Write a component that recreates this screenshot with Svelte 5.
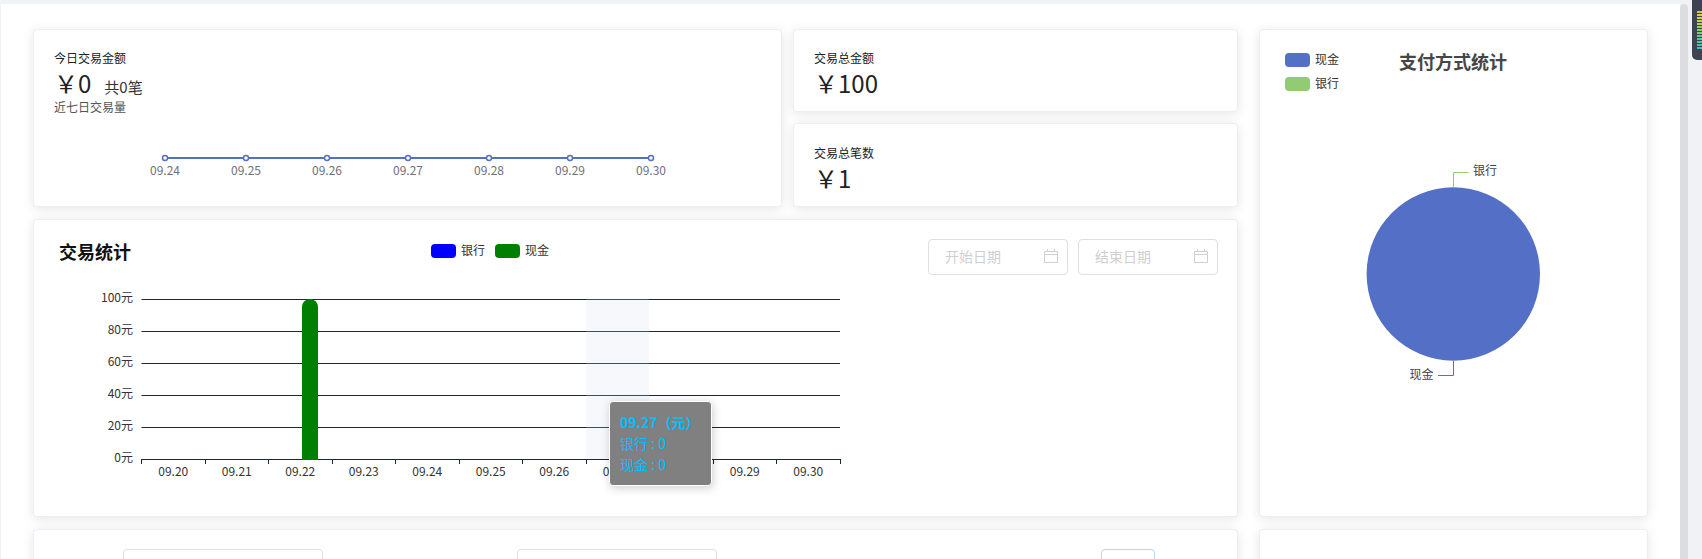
<script lang="ts">
	const miniDays = ['09.24', '09.25', '09.26', '09.27', '09.28', '09.29', '09.30'];
	const miniX = (i: number) => 111 + i * 81;

	const days = ['09.20', '09.21', '09.22', '09.23', '09.24', '09.25', '09.26', '09.27', '09.28', '09.29', '09.30'];
	const axisLeft = 81.5;
	const step = 63.5;
	const gridLines = [
		{ y: 14.5, label: '100元' },
		{ y: 46.5, label: '80元' },
		{ y: 78.5, label: '60元' },
		{ y: 110.5, label: '40元' },
		{ y: 142.5, label: '20元' },
		{ y: 174.5, label: '0元' }
	];
	const ticks = Array.from({ length: 12 }, (_, i) => Math.round(axisLeft + i * step - 0.5) + 0.5);
	const meter = ['#d8c93c', '#d8d03c', '#cfd33e', '#c0d544', '#aed64a', '#97d455', '#7fd268', '#6ed07a', '#5ccd8a', '#4fcb98', '#44c9a6', '#3cc6b0', '#36c4b8'];
</script>

<div class="page">
	<main class="panel">
		<div class="left">
			<div class="top-row">
				<section class="card today">
					<div class="label">今日交易金额</div>
					<div class="value-row">
						<span class="value">￥0</span>
						<span class="count">共0笔</span>
					</div>
					<div class="label muted">近七日交易量</div>
					<svg class="mini-chart" width="708" height="68">
						<line x1={miniX(0)} x2={miniX(6)} y1="38" y2="38" stroke="#5470c6" stroke-width="2" />
						{#each miniDays as day, i}
							<circle cx={miniX(i)} cy="38" r="2.500" fill="#fff" stroke="#5470c6" stroke-width="1.500" />
							<text class="mini-tick" x={miniX(i)} y="55" text-anchor="middle">{day}</text>
						{/each}
					</svg>
				</section>
				<div class="totals">
					<section class="card total">
						<div class="label">交易总金额</div>
						<div class="value">￥100</div>
					</section>
					<section class="card total count-total">
						<div class="label">交易总笔数</div>
						<div class="value">￥1</div>
					</section>
				</div>
			</div>

			<section class="card stats">
				<header class="stats-head">
					<h2 class="stats-title">交易统计</h2>
					<div class="stats-legend">
						<span class="swatch blue"></span><span class="legend-text">银行</span>
						<span class="swatch green"></span><span class="legend-text">现金</span>
					</div>
					<div class="dates">
						<div class="date-input">
							<span>开始日期</span>
							<svg width="14" height="14" viewBox="0 0 14 14" fill="none" stroke="#cfcfcf">
								<path d="M.5 2.5h13v11H.5zM.5 5.5h13M3.5 0v3M10.5 0v3" />
							</svg>
						</div>
						<div class="date-input">
							<span>结束日期</span>
							<svg width="14" height="14" viewBox="0 0 14 14" fill="none" stroke="#cfcfcf">
								<path d="M.5 2.5h13v11H.5zM.5 5.5h13M3.5 0v3M10.5 0v3" />
							</svg>
						</div>
					</div>
				</header>
				<div class="bars">
					<svg width="800" height="205">
						{#each gridLines as g}
							<line x1={axisLeft} x2="780" y1={g.y} y2={g.y} stroke="#1b2838" />
							<text class="tick" x="73" y={g.y + 2.500} text-anchor="end">{g.label}</text>
						{/each}
						{#each ticks as x}
							<line x1={x} x2={x} y1="174" y2="179" stroke="#1b2838" />
						{/each}
						{#each days as day, i}
							<text class="tick" x={axisLeft + (i + 0.5) * step} y="191" text-anchor="middle">{day}</text>
						{/each}
						<path d="M242 175V22a8 8 0 0 1 16 0V175z" fill="#008000" />
						<rect x="526" y="14" width="63" height="160" fill="#d2dbee" fill-opacity="0.2" />
					</svg>
					<div class="tooltip">
						<div class="tooltip-title">09.27（元）</div>
						<div>银行 : 0</div>
						<div>现金 : 0</div>
					</div>
				</div>
			</section>

			<section class="card filters">
				<div class="filter-input first"></div>
				<div class="filter-input second"></div>
				<div class="filter-button"></div>
			</section>
		</div>

		<div class="right">
			<section class="card pay">
				<header class="pay-head">
					<div class="pay-legend">
						<div class="pay-item"><span class="swatch cash"></span><span class="legend-text">现金</span></div>
						<div class="pay-item"><span class="swatch bank"></span><span class="legend-text">银行</span></div>
					</div>
					<h2 class="pay-title">支付方式统计</h2>
				</header>
				<svg class="pie" width="386" height="240">
					<circle cx="193.300" cy="114" r="86.700" fill="#5470c6" />
					<path d="M193.500 27V12.500H208.500" fill="none" stroke="#91cc75" />
					<path d="M193.500 201V215.500H178" fill="none" stroke="#5470c6" />
					<text class="pie-label" x="213" y="15">银行</text>
					<text class="pie-label" x="173.500" y="218.500" text-anchor="end">现金</text>
				</svg>
			</section>
			<section class="card pay-next"></section>
		</div>
	</main>

	<div class="scroll-rail"><div class="scroll-thumb"></div></div>

	<aside class="meter">
		{#each meter as color}
			<span class="meter-bar" style:background={color}></span>
		{/each}
	</aside>
</div>

<style>
	:global(html),
	:global(body) {
		margin: 0;
		overflow: hidden;
	}

	.page {
		position: relative;
		display: flex;
		height: 559px;
		padding-top: 4px;
		box-sizing: border-box;
		overflow: hidden;
		background: #f0f2f5;
		font-family: 'Noto Sans CJK SC', sans-serif;
		color: #303133;
	}

	.panel {
		display: flex;
		gap: 21px;
		width: 1679px;
		margin-left: 1px;
		padding: 25px 0 0 32px;
		box-sizing: border-box;
		background: #fff;
	}

	.left {
		display: flex;
		flex-direction: column;
		gap: 12px;
		width: 1205px;
		flex-shrink: 0;
	}
	.right {
		display: flex;
		flex-direction: column;
		gap: 12px;
		width: 389px;
		flex-shrink: 0;
	}

	.card {
		flex-shrink: 0;
		box-sizing: border-box;
		background: #fff;
		border: 1px solid #ebeef5;
		border-radius: 4px;
		box-shadow: 0 2px 12px 0 rgba(0, 0, 0, 0.1);
	}

	.top-row {
		display: flex;
		flex-shrink: 0;
		gap: 11px;
		height: 178px;
	}

	.today {
		width: 749px;
		padding: 19px 19px 0 20px;
	}

	.label {
		font-size: 12px;
		line-height: 18px;
		color: #222;
	}
	.label.muted {
		color: #555;
	}

	.value-row {
		display: flex;
		height: 31px;
	}
	.value {
		font-size: 24px;
		line-height: 32px;
		color: #222;
	}
	.count {
		align-self: flex-end;
		margin-left: 13px;
		font-size: 15px;
		line-height: 22px;
		color: #333;
	}

	.mini-chart {
		display: block;
		margin-top: 4px;
	}
	.mini-tick {
		font-size: 12px;
		fill: #6e7079;
	}

	.totals {
		display: flex;
		flex-direction: column;
		gap: 11px;
		width: 445px;
	}
	.total {
		height: 83px;
		padding: 19px 19px 0 20px;
	}
	.total.count-total {
		height: 84px;
		padding-top: 20px;
	}

	.stats {
		height: 298px;
	}
	.stats-head {
		display: flex;
		align-items: flex-start;
		height: 65px;
		padding: 19px 19px 0 25px;
		box-sizing: border-box;
	}
	.stats-title {
		margin: 0;
		font-size: 18px;
		line-height: 24px;
		font-weight: 700;
		color: #111;
	}
	.stats-legend {
		display: flex;
		align-items: center;
		height: 14px;
		margin: 5px 0 0 300px;
	}
	.legend-text {
		margin: -2px 0 0 5px;
		font-size: 12px;
		line-height: 14px;
		color: #333;
	}
	.swatch {
		display: block;
		width: 25px;
		height: 14px;
		border-radius: 4px;
	}
	.swatch.green {
		margin-left: 10px;
		background: #008000;
	}
	.swatch.blue {
		background: #00f;
	}
	.swatch.cash {
		background: #5470c6;
	}
	.swatch.bank {
		background: #91cc75;
	}

	.dates {
		display: flex;
		gap: 10px;
		margin-left: auto;
	}
	.date-input {
		display: flex;
		align-items: center;
		justify-content: space-between;
		width: 140px;
		height: 36px;
		padding: 0 9px 2px 16px;
		box-sizing: border-box;
		border: 1px solid #dcdfe6;
		border-radius: 4px;
		font-size: 14px;
		color: #cfcfcf;
	}
	.date-input svg {
		display: block;
	}

	.bars {
		position: relative;
		margin-left: 26px;
	}
	.bars svg {
		display: block;
	}
	.tick {
		font-size: 12px;
		fill: #333;
	}

	.tooltip {
		position: absolute;
		left: 549px;
		top: 116px;
		width: 103px;
		height: 85px;
		padding: 10px 10px;
		box-sizing: border-box;
		background: #808080;
		border: 1px solid #fff;
		border-radius: 4px;
		box-shadow: 1px 2px 10px rgba(0, 0, 0, 0.2);
		font-size: 14px;
		line-height: 21px;
		color: #00bfff;
		white-space: nowrap;
	}
	.tooltip-title {
		font-weight: 700;
	}

	.filters {
		display: flex;
		height: 60px;
		padding: 19px 0 0 89px;
	}
	.filter-input {
		width: 200px;
		height: 40px;
		box-sizing: border-box;
		border: 1px solid #dcdfe6;
		border-radius: 4px;
	}
	.filter-input.second {
		margin-left: 194px;
	}
	.filter-button {
		width: 54px;
		height: 40px;
		margin-left: 384px;
		box-sizing: border-box;
		border: 1px solid #b3d8ff;
		border-radius: 4px;
	}

	.pay {
		height: 488px;
	}
	.pay-head {
		display: flex;
		align-items: flex-start;
		padding: 23px 0 0 25px;
	}
	.pay-item {
		display: flex;
		align-items: center;
		height: 14px;
	}
	.pay-item + .pay-item {
		margin-top: 10px;
	}
	.pay-title {
		margin: -5px 0 0 60px;
		font-size: 18px;
		line-height: 26px;
		font-weight: 700;
		color: #464646;
	}
	.pie {
		display: block;
		margin-top: 69px;
	}
	.pie-label {
		font-size: 12px;
		fill: #444;
	}
	.pay-next {
		height: 60px;
	}

	.scroll-rail {
		width: 8px;
		flex-shrink: 0;
	}
	.scroll-thumb {
		height: 100%;
		background: #dcdde0;
		border-radius: 4px 4px 0 0;
	}

	.meter {
		position: absolute;
		top: 0;
		right: 0;
		display: flex;
		flex-direction: column;
		gap: 1px;
		width: 10px;
		height: 60px;
		padding: 11px 0 0 5px;
		box-sizing: border-box;
		background: #3d4350;
		border-radius: 0 0 0 5px;
	}
	.meter-bar {
		display: block;
		height: 2px;
	}
</style>
